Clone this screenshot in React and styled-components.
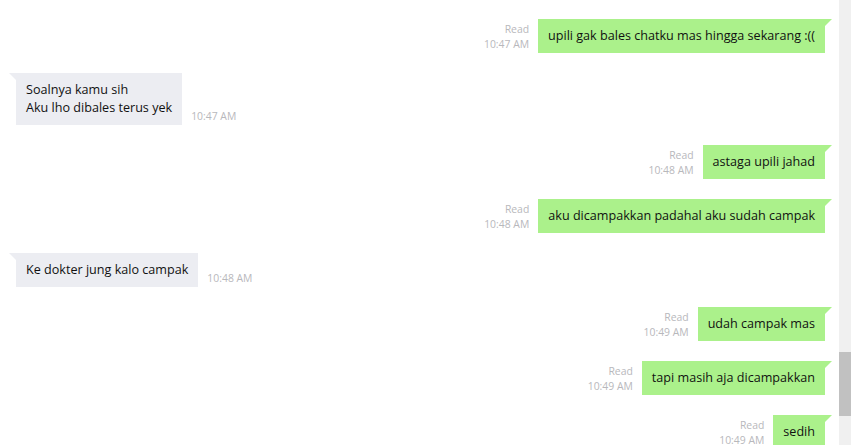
import React from 'react'
import styled, { createGlobalStyle } from 'styled-components'

const messages = [
  { me: true, text: ['upili gak bales chatku mas hingga sekarang :(('], time: '10:47 AM' },
  { me: false, text: ['Soalnya kamu sih', 'Aku lho dibales terus yek'], time: '10:47 AM' },
  { me: true, text: ['astaga upili jahad'], time: '10:48 AM' },
  { me: true, text: ['aku dicampakkan padahal aku sudah campak'], time: '10:48 AM' },
  { me: false, text: ['Ke dokter jung kalo campak'], time: '10:48 AM' },
  { me: true, text: ['udah campak mas'], time: '10:49 AM' },
  { me: true, text: ['tapi masih aja dicampakkan'], time: '10:49 AM' },
  { me: true, text: ['sedih'], time: '10:49 AM' },
]

function App() {
  return (
    <>
      <Global />
      <Container>
        <Chat>
          {messages.map((m, key) => (
            <Row key={key} me={m.me}>
              <Bubble me={m.me}>
                {m.text.map((line, i) => (
                  <div key={i}>{line}</div>
                ))}
              </Bubble>
              <Meta me={m.me}>
                {m.me && <span>Read</span>}
                <span>{m.time}</span>
              </Meta>
            </Row>
          ))}
        </Chat>
        <ScrollTrack>
          <Thumb />
        </ScrollTrack>
      </Container>
    </>
  )
}

const Global = createGlobalStyle`
  body{
    margin:0;
    background:#fff;
    font-family:"Open Sans","Noto Sans",sans-serif;
  }
`

const Container = styled.div`
  display:flex;
  height:445px;
  overflow:hidden;
`

const Chat = styled.div`
  flex:1;
  display:flex;
  flex-direction:column;
  gap:20px;
  padding:19px 14px 0 16px;
  overflow:hidden;
`

const Row = styled.div`
  display:flex;
  flex-direction:${p => (p.me ? 'row-reverse' : 'row')};
  align-items:flex-end;
  gap:9px;
  flex-shrink:0;
`

const Bubble = styled.div`
  position:relative;
  background:${p => (p.me ? '#abf18b' : '#ecedf2')};
  color:#111;
  font-size:12.6px;
  line-height:18px;
  padding:8px 10px;
  &::before{
    content:'';
    position:absolute;
    top:0;
    ${p => (p.me ? 'right:-7px;' : 'left:-7px;')}
    border-top:7px solid ${p => (p.me ? '#abf18b' : '#ecedf2')};
    ${p => (p.me ? 'border-right:7px solid transparent;' : 'border-left:7px solid transparent;')}
  }
`

const Meta = styled.div`
  display:flex;
  flex-direction:column;
  align-items:${p => (p.me ? 'flex-end' : 'flex-start')};
  font-size:10.4px;
  line-height:15px;
  color:#b8b8bc;
  margin-bottom:1px;
`

const ScrollTrack = styled.div`
  width:12px;
  background:#f0f0f0;
`

const Thumb = styled.div`
  margin-top:352px;
  height:64px;
  background:#c1c1c1;
`

export default App
